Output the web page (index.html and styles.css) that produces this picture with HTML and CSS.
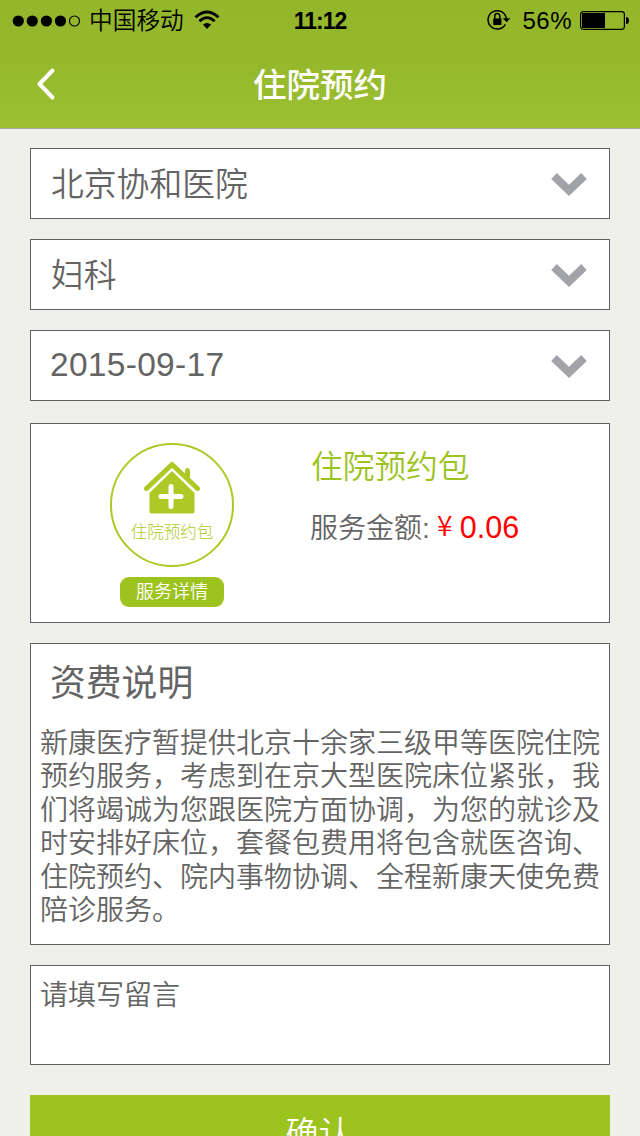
FILE: index.html
```html
<!DOCTYPE html>
<html lang="zh-CN">
<head>
<meta charset="utf-8">
<title>住院预约</title>
<link rel="stylesheet" href="styles.css">
</head>
<body>
<div class="screen">
  <header class="header">
    <div class="status">
      <div class="status-left">
        <svg class="signal" width="70" height="14" viewBox="0 0 70 14"><circle cx="6.3" cy="7" r="5.6"/><circle cx="20.3" cy="7" r="5.6"/><circle cx="34.4" cy="7" r="5.6"/><circle cx="48.4" cy="7" r="5.6"/><circle cx="62.5" cy="7" r="5" fill="none" stroke="#000" stroke-width="1.1"/></svg>
        <span class="carrier">中国移动</span>
        <svg class="wifi" width="26" height="20" viewBox="0 0 26 20"><g fill="none" stroke="#000" stroke-width="2.8"><path d="M1.5 7.3Q13 -3.3 24.5 7.3"/><path d="M5.4 11.2Q13 4 20.6 11.2"/></g><path d="M8.9 14.6Q13 11.2 17.1 14.6L13 19Z"/></svg>
      </div>
      <div class="clock">11:12</div>
      <div class="status-right">
        <svg class="lock" width="24" height="22" viewBox="0 0 24 22"><path d="M18.3 15.3A9.2 9.2 0 1 1 19.3 9.4" fill="none" stroke="#000" stroke-width="1.5"/><path d="M15.8 9.2H23.3L19.6 13.3Z"/><rect x="6.2" y="9.4" width="8.3" height="6.5" rx=".7"/><path d="M7.8 10V7.1a2.5 2.5 0 0 1 5 0V10" fill="none" stroke="#000" stroke-width="1.5"/></svg>
        <span class="percent">56%</span>
        <svg class="battery" width="50" height="20" viewBox="0 0 50 20"><rect x=".6" y=".6" width="43.8" height="17.8" rx="2.8" fill="none" stroke="#000" stroke-width="1.2"/><rect x="2" y="2" width="23" height="15"/><path d="M46 6q3 0 3 3.5t-3 3.5z"/></svg>
      </div>
    </div>
    <div class="navbar">
      <svg class="back" width="22" height="34" viewBox="0 0 22 34"><path d="M17.500 3.5L4.500 17L17.500 30.5" fill="none" stroke="#fff" stroke-width="4" stroke-linecap="round" stroke-linejoin="round"/></svg>
      <h1 class="title">住院预约</h1>
      <span></span>
    </div>
  </header>
  <main class="content">
    <div class="select"><span>北京协和医院</span><svg class="arrow" width="36" height="26" viewBox="0 0 36 26"><path d="M3 4L18 18.5L33 4"/></svg></div>
    <div class="select"><span>妇科</span><svg class="arrow" width="36" height="26" viewBox="0 0 36 26"><path d="M3 4L18 18.5L33 4"/></svg></div>
    <div class="select date"><span>2015-09-17</span><svg class="arrow" width="36" height="26" viewBox="0 0 36 26"><path d="M3 4L18 18.5L33 4"/></svg></div>
    <section class="package">
      <div class="visual">
        <div class="badge">
          <svg width="58" height="56" viewBox="0 0 58 56"><path d="M42.5 18V10.5a2 2 0 0 1 4 0V20z" fill="#aec926" stroke="#aec926"/><path d="M3.5 28.5L29 4.500L54.5 28.5" fill="none" stroke="#aec926" stroke-width="5" stroke-linecap="round" stroke-linejoin="round"/><path d="M6.5 33L29 11L51.5 33V51q0 2.5-2.5 2.5H9Q6.5 53.5 6.5 51Z" fill="#aec926"/><path d="M18 36.5H38M28 26.5V46.5" stroke="#fff" stroke-width="5" stroke-linecap="round"/></svg>
          <span class="badge-text">住院预约包</span>
        </div>
        <div class="detail">服务详情</div>
      </div>
      <div class="info">
        <h2 class="package-name">住院预约包</h2>
        <div class="price"><span class="price-label">服务金额:</span><span class="yen">¥</span><span class="amount">0.06</span></div>
      </div>
    </section>
    <section class="fees">
      <h2 class="fees-title">资费说明</h2>
      <p class="fees-text">新康医疗暂提供北京十余家三级甲等医院住院<br>预约服务，考虑到在京大型医院床位紧张，我<br>们将竭诚为您跟医院方面协调，为您的就诊及<br>时安排好床位，套餐包费用将包含就医咨询、<br>住院预约、院内事物协调、全程新康天使免费<br>陪诊服务。</p>
    </section>
    <div class="message">请填写留言</div>
    <div class="submit">确认</div>
  </main>
</div>
</body>
</html>
```

FILE: styles.css
```css
* { box-sizing: border-box; }
body { margin: 0; }
svg { display: block; flex: none; }
.screen {
  width: 640px; height: 1136px; overflow: hidden;
  background: #eff0ea; color: #646464;
  font-family: "Liberation Sans", "Noto Sans CJK SC", sans-serif;
  font-weight: 350; white-space: nowrap;
}
.header {
  height: 129px; border-bottom: 1px solid #a6a99c;
  background: linear-gradient(#94b62b, #95b82c 50%, #9dc133);
}
.status {
  height: 40px; display: grid; grid-template-columns: 1fr auto 1fr;
  align-items: center; color: #000; padding: 0 10px 0 12px;
}
.status-left, .status-right { display: flex; align-items: center; }
.status-right { justify-content: flex-end; }
.signal { margin-right: 7px; }
.carrier { font-size: 23.7px; line-height: 40px; padding-top: 1px; }
.wifi { margin-left: 10px; margin-top: -2px; }
.clock { font-size: 23px; font-weight: 700; letter-spacing: -1px; margin-left: -2px; padding-top: 1px; }
.lock { margin-right: 11px; margin-top: -1px; }
.percent { font-size: 24px; letter-spacing: .5px; margin-right: 8px; padding-top: 1px; }
.battery { margin-top: 1px; }
.navbar {
  height: 88px; display: grid; grid-template-columns: 80px 1fr 80px; align-items: center;
}
.back { margin-left: 35px; }
.title { margin: 0; padding-top: 3px; color: #fff; font-size: 33.5px; font-weight: 500; line-height: 60px; text-align: center; }
.content { padding: 19px 30px 0; display: flex; flex-direction: column; }
.select, .package, .fees, .message { border: 1px solid #5e5f61; background: #fff; }
.select {
  height: 71px; margin-bottom: 20px; padding: 0 22px 0 20px;
  display: flex; align-items: center; justify-content: space-between;
  font-size: 32.8px; line-height: 60px;
}
.select span { padding-top: 3px; }
.date { margin-bottom: 22px; padding-left: 19px; font-size: 33.5px; letter-spacing: .3px; }
.date span { padding-top: 0; padding-bottom: 2px; }
.arrow { fill: none; stroke: #a2a3a8; stroke-width: 8; margin-top: 2px; }
.package { height: 200px; margin-bottom: 20px; display: flex; }
.visual { width: 279px; padding: 19px 0 0 3px; display: flex; flex-direction: column; align-items: center; }
.badge {
  width: 124px; height: 124px; border: 2.5px solid #aec926; border-radius: 50%;
  display: flex; flex-direction: column; align-items: center; padding-top: 15px;
}
.badge-text { color: #aec926; font-size: 16.5px; line-height: 28px; padding-top: 2px; font-weight: 300; }
.detail {
  width: 104px; height: 30px; margin-top: 10px; border-radius: 9px;
  background: #9cc31e; color: #fff; font-size: 18px; line-height: 31px; text-align: center;
}
.info { padding-top: 23px; }
.package-name { margin: 0; padding-left: 1px; color: #9cc31e; font-size: 31.7px; line-height: 40px; font-weight: 350; }
.price { display: flex; align-items: center; height: 40px; margin-top: 19px; font-size: 28px; }
.price-label { margin-top: -1px; }
.yen { width: 30px; text-align: center; color: #f00; font-family: "Noto Sans CJK SC", sans-serif; font-size: 28px; line-height: 40px; margin-top: -4px; }
.amount { color: #f00; font-size: 30.5px; padding-top: 2px; }
.fees { height: 302px; margin-bottom: 20px; padding: 11px 9px; }
.fees-title { margin: 0; padding-left: 10px; font-size: 35.8px; line-height: 58px; font-weight: 400; }
.fees-text { margin: 14px 0 0; font-size: 28px; line-height: 33.4px; }
.message { height: 100px; margin-bottom: 30px; padding: 10px 9px; font-size: 28px; line-height: 40px; }
.submit { height: 71px; padding-right: 3px; background: #9cc31e; color: #fff; font-size: 33px; line-height: 78px; text-align: center; }
```
